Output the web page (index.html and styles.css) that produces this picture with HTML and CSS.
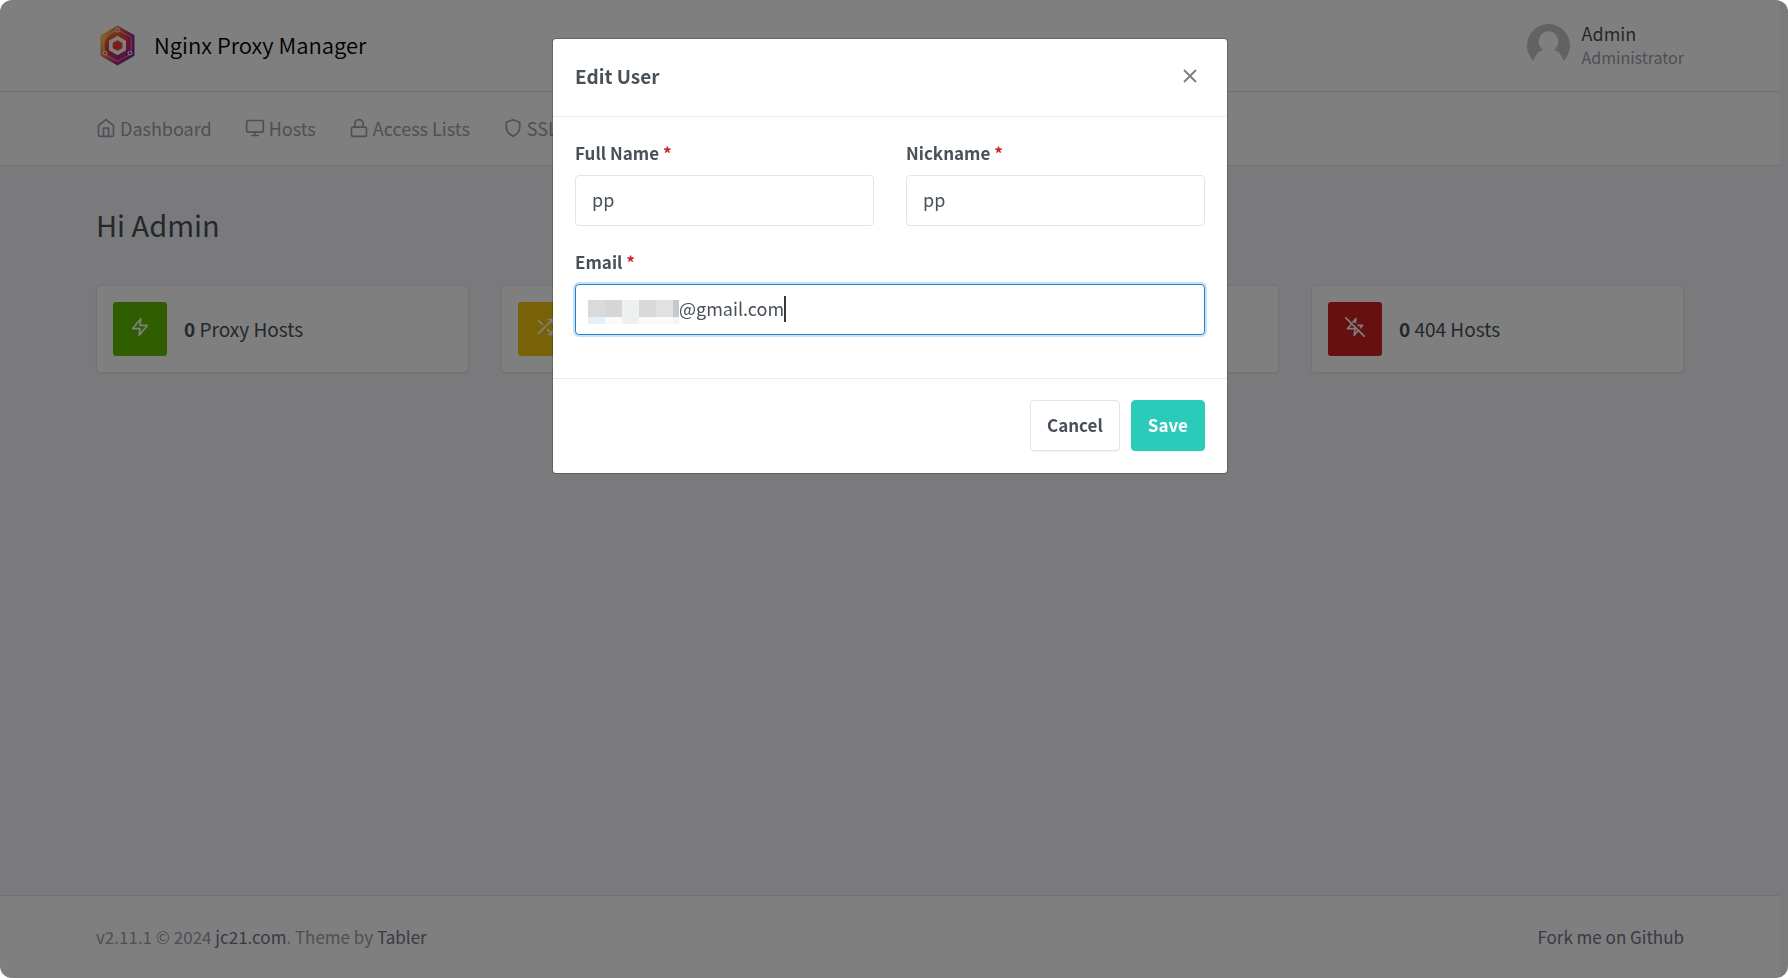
FILE: index.html
```html
<!DOCTYPE html>
<html lang="en">
<head>
<meta charset="utf-8">
<title>Nginx Proxy Manager</title>
<link rel="stylesheet" href="styles.css">
</head>
<body>
<div class="app">
  <header class="header">
    <div class="container header-row">
      <a class="brand" href="#">
        <svg class="logo" viewBox="0 0 36 42" aria-hidden="true">
          <defs>
            <linearGradient id="shell" x1="0" y1="0.2" x2="1" y2="0.8">
              <stop offset="0" stop-color="#fbdc4a"/><stop offset="0.35" stop-color="#f0663a"/><stop offset="0.65" stop-color="#b02a80"/><stop offset="1" stop-color="#7a2a9a"/>
            </linearGradient>
            <linearGradient id="ring" x1="0.3" y1="0" x2="0.8" y2="1">
              <stop offset="0" stop-color="#f26a21"/><stop offset="0.5" stop-color="#e0303c"/><stop offset="1" stop-color="#9a2490"/>
            </linearGradient>
          </defs>
          <path d="M18 0.5 35.5 10.500V31.500L18 41.500.5 31.500V10.500Z" fill="url(#shell)"/>
          <path d="M18 4.500 32 12.500V29.500L18 37.500 4 29.500V12.500Z" fill="none" stroke="#f0d8e4" stroke-width="1" stroke-opacity=".6"/>
          <circle cx="18" cy="21" r="13.200" fill="url(#ring)"/>
          <path d="M18 12 26 16.500V25.500L18 30 10 25.500V16.500Z" fill="#fff" stroke="#fff" stroke-width="1.500" stroke-linejoin="round"/>
          <path d="M18 16 22.500 18.500V23.500L18 26 13.500 23.500V18.500Z" fill="#ef4136" stroke="#ef4136" stroke-width="1" stroke-linejoin="round"/>
          <g fill="#a82c83" stroke="#f3dde8" stroke-width="1.200"><circle cx="18" cy="5" r="1.900" fill="#f0663a"/><circle cx="5.200" cy="28.800" r="1.900" fill="#f0663a"/><circle cx="30.800" cy="28.800" r="1.900"/></g>
        </svg>
        <span class="brand-name">Nginx Proxy Manager</span>
      </a>
      <a class="account" href="#">
        <svg class="avatar" viewBox="0 0 43 43" aria-hidden="true">
          <path d="M6.500 37A21.500 21.500 0 1 1 36.500 37C35 31 31.500 27 27 26A9.800 10.300 0 1 0 16 26C11.500 27 8 31 6.500 37Z" fill="#c4c4c4"/>
        </svg>
        <span class="account-text"><span class="account-name">Admin</span><span class="account-role">Administrator</span></span>
      </a>
    </div>
  </header>
  <nav class="nav">
    <div class="container nav-row">
      <a href="#"><svg class="icon" viewBox="0 0 24 24"><path d="M3 9l9-7 9 7v11a2 2 0 0 1-2 2H5a2 2 0 0 1-2-2z"/><path d="M9 22V12h6v10"/></svg>Dashboard</a>
      <a href="#"><svg class="icon" viewBox="0 0 24 24"><rect x="2" y="3" width="20" height="14" rx="2"/><path d="M8 21h8M12 17v4"/></svg>Hosts</a>
      <a href="#"><svg class="icon" viewBox="0 0 24 24"><rect x="3" y="11" width="18" height="11" rx="2"/><path d="M7 11V7a5 5 0 0 1 10 0v4"/></svg>Access Lists</a>
      <a href="#"><svg class="icon" viewBox="0 0 24 24"><path d="M12 22s8-4 8-10V5l-8-3-8 3v7c0 6 8 10 8 10z"/></svg>SSL Certificates</a>
    </div>
  </nav>
  <main class="container main">
    <h1>Hi Admin</h1>
    <div class="cards">
      <a class="card" href="#"><span class="stamp green"><svg class="icon" viewBox="0 0 24 24"><path d="M13 2 3 14h9l-1 8 10-12h-9z"/></svg></span><span><strong>0</strong> Proxy Hosts</span></a>
      <a class="card" href="#"><span class="stamp yellow"><svg class="icon" viewBox="0 0 24 24"><path d="M16 3h5v5M4 20 21 3M21 16v5h-5M15 15l6 6M4 4l5 5"/></svg></span><span><strong>0</strong> Redirection Hosts</span></a>
      <a class="card" href="#"><span class="stamp blue"><svg class="icon" viewBox="0 0 24 24"><path d="M5 12a10 10 0 0 1 14 0M8 16a6 6 0 0 1 8 0M12 20h0"/></svg></span><span><strong>0</strong> Streams</span></a>
      <a class="card" href="#"><span class="stamp red"><svg class="icon" viewBox="0 0 24 24"><path d="M12.400 6.800 13 2l-3.400 4.100M18.600 12.900 21 10h-5.300M8 8l-5 6h9l-1 8 5-6M1 1l22 22"/></svg></span><span><strong>0</strong> 404 Hosts</span></a>
    </div>
  </main>
  <footer class="footer">
    <div class="container footer-row">
      <span>v2.11.1 © 2024 <a href="#">jc21.com</a>. Theme by <a href="#">Tabler</a></span>
      <a href="#">Fork me on Github</a>
    </div>
  </footer>
</div>
<div class="backdrop">
  <form class="modal" role="dialog" aria-labelledby="dialog-title">
    <div class="modal-header">
      <h2 id="dialog-title">Edit User</h2>
      <button class="close" type="button" aria-label="Close"><svg viewBox="0 0 14 14"><path d="M1 1 13 13M13 1 1 13"/></svg></button>
    </div>
    <div class="modal-body">
      <div class="field"><label for="name">Full Name <span class="required">*</span></label><input id="name" type="text" value="pp"></div>
      <div class="field"><label for="nick">Nickname <span class="required">*</span></label><input id="nick" type="text" value="pp"></div>
      <div class="field wide"><label for="email">Email <span class="required">*</span></label>
        <div class="email-box">
          <input id="email" class="focused" type="text" value="@gmail.com">
          <svg class="mask" viewBox="0 0 91 24" shape-rendering="crispEdges" aria-hidden="true">
            <path fill="#d9dadb" d="M0 0h17v17H0z"/><path fill="#d5d6d7" d="M17 0h17v17H17z"/><path fill="#eff0f0" d="M34 0h17v24H34z"/><path fill="#d8d9da" d="M51 0h17v17H51z"/><path fill="#e0e1e3" d="M68 0h17v17H68z"/><path fill="#c7c8ca" d="M85 0h6v17h-6z"/><path fill="#e2f0f9" d="M0 17h17v7H0z"/><path fill="#fafafa" d="M17 17h17v7H17zM51 17h34v7H51z"/><path fill="#f3f3f3" d="M85 17h6v7h-6z"/>
          </svg>
          <span class="caret"></span>
        </div>
      </div>
    </div>
    <div class="modal-footer">
      <button class="btn" type="button">Cancel</button>
      <button class="btn save" type="submit">Save</button>
    </div>
  </form>
</div>
</body>
</html>
```
FILE: styles.css
```css
* { box-sizing: border-box; }
body {
  margin: 0;
  background: #fff;
  color: #495057;
  font-family: "Noto Sans CJK SC", "Noto Sans", sans-serif;
  font-size: 17px;
  line-height: 24px;
}
a { color: inherit; text-decoration: none; }
h1, h2 { margin: 0; }
input, button { font: inherit; color: inherit; }

.app {
  display: flex;
  flex-direction: column;
  min-height: 100vh;
  padding-right: 8px;
  background: #f5f5fa;
  border-radius: 12px;
  overflow: hidden;
}
.container { width: 100%; padding: 0 96px; }
.icon { width: 20px; height: 20px; fill: none; stroke: currentColor; stroke-width: 2; stroke-linecap: round; stroke-linejoin: round; }

.header, .nav { background: #fff; border-bottom: 1px solid #dfe3ea; }
.header-row { display: flex; align-items: center; justify-content: space-between; height: 91px; }
.brand { display: flex; align-items: center; gap: 19px; color: #000; font-size: 22px; font-weight: 350; }
.brand-name { padding-bottom: 4px; }
.logo { width: 35px; height: 41px; margin-left: 4px; }
.account { display: flex; align-items: center; gap: 12px; }
.avatar { width: 43px; height: 43px; }
.account-text { display: flex; flex-direction: column; padding-bottom: 2px; font-size: 18px; }
.account-role { font-size: 16px; color: #9aa0ac; }
.nav-row { display: flex; align-items: center; gap: 33px; height: 73px; padding-bottom: 1px; color: #9aa0ac; font-size: 18px; }
.nav-row a { display: flex; align-items: center; gap: 4px; }

.main { flex: 1; padding-top: 38px; }
h1 { font-size: 29px; font-weight: 400; line-height: 40px; }
.cards { display: grid; grid-template-columns: repeat(4, 1fr); gap: 32px; margin-top: 41px; }
.card {
  display: flex;
  align-items: center;
  gap: 17px;
  padding: 16px;
  background: #fff;
  border: 1px solid #e2e6ee;
  border-radius: 4px;
  box-shadow: 0 1px 2px rgba(0, 0, 0, .06);
  font-size: 19px;
}
.stamp { display: flex; align-items: center; justify-content: center; width: 54px; height: 54px; padding-bottom: 4px; border-radius: 3px; color: #fff; }
.green { background: #5eba00; }
.yellow { background: #f1c40f; }
.blue { background: #467fcf; }
.red { background: #cd201f; }

.footer { background: #fff; border-top: 1px solid #dfe3ea; color: #9aa0ac; }
.footer a { color: #6e7687; }
.footer-row { display: flex; align-items: center; justify-content: space-between; height: 82px; }

.backdrop {
  position: fixed;
  inset: 0;
  padding: 39px 8px 0 0;
  background: rgba(0, 0, 0, .5);
  border-radius: 12px;
}
.modal { max-width: 674px; margin: 0 auto; background: #fff; border-radius: 3px; box-shadow: 0 0 0 1px rgba(0, 0, 0, .2); }
.modal-header { display: flex; align-items: center; justify-content: space-between; height: 78px; padding: 0 22px 4px; border-bottom: 1px solid #e9ecef; }
.modal-header h2 { font-size: 19px; font-weight: 700; }
.close { display: flex; padding: 8px; background: none; border: 0; }
.close svg { width: 14px; height: 14px; fill: none; stroke: #808080; stroke-width: 2; }
.modal-body { display: grid; grid-template-columns: 1fr 1fr; gap: 24px 32px; padding: 24px 22px 43px; }
.wide { grid-column: 1 / -1; }
label { display: block; margin-bottom: 10px; font-weight: 700; }
.required { color: #cd201f; }
input { display: block; width: 100%; height: 51px; padding: 0 16px 3px; background: #fff; border: 1px solid #e0e5ec; border-radius: 4px; font-size: 18px; outline: 0; }
.email-box { position: relative; }
.email-box .focused { padding-left: 103px; border-color: #1f85d0; box-shadow: 0 0 0 2px rgba(70, 145, 220, .28); }
.mask { position: absolute; left: 13px; top: 16px; width: 91px; height: 24px; }
.caret { position: absolute; left: 209px; top: 12px; width: 2px; height: 26px; background: #343a40; }
.modal-footer { display: flex; justify-content: flex-end; gap: 11px; padding: 21px 22px 22px; border-top: 1px solid #e9ecef; }
.btn { height: 51px; padding: 0 16px 2px; background: #fff; border: 1px solid #e0e5ec; border-radius: 4px; box-shadow: 0 1px 1px rgba(0, 0, 0, .05); font-weight: 700; }
.save { background: #2bcbba; border-color: #2bcbba; color: #fff; }
```
